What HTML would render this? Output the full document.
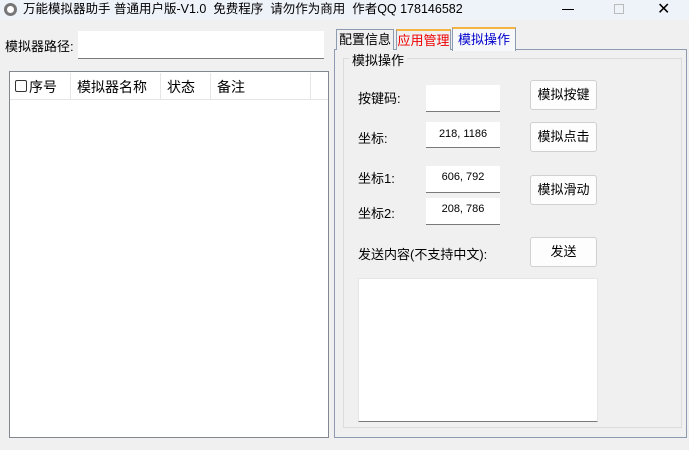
<!DOCTYPE html>
<html><head><meta charset="utf-8"><style>
*{box-sizing:border-box;margin:0;padding:0}
body{width:689px;height:450px;background:#f0f0f0;font-family:"Liberation Sans","Noto Sans CJK SC",sans-serif;font-size:13px;color:#000;position:relative;overflow:hidden}
.a{position:absolute;white-space:nowrap}
.in{position:absolute;background:#fff;border-bottom:1px solid #7a7a7a;font-size:11px;text-align:center;line-height:22px}
.btn{position:absolute;background:#fdfdfd;border:1px solid #d0d0d0;border-radius:3px;text-align:center;font-size:13px}
</style></head><body>
<div class="a" style="left:0;top:0;width:689px;height:20px;background:#eef2f9"></div>
<div class="a" style="left:4px;top:3px;width:13px;height:13px;border-radius:50%;border:3px solid #777;background:#fff"></div>
<div class="a" style="left:23px;top:1px;font-size:12.5px;line-height:16px">万能模拟器助手 普通用户版-V1.0&nbsp; 免费程序&nbsp; 请勿作为商用&nbsp; 作者QQ 178146582</div>
<div class="a" style="left:562px;top:9px;width:12px;height:1px;background:#000"></div>
<div class="a" style="left:614px;top:4px;width:10px;height:10px;border:1px solid #bbb"></div>
<div class="a" style="left:657px;top:-1px;font-size:16px">✕</div>

<div class="a" style="left:5px;top:36px">模拟器路径:</div>
<div class="a" style="left:78px;top:31px;width:246px;height:28px;background:#fff;border-bottom:1px solid #7a7a7a"></div>

<div class="a" style="left:9px;top:71px;width:320px;height:367px;background:#fff;border:1px solid #828790"></div>
<div class="a" style="left:10px;top:72px;width:318px;height:28px;border-bottom:1px solid #e5e5e5"></div>
<div class="a" style="left:70px;top:73px;width:1px;height:26px;background:#e5e5e5"></div>
<div class="a" style="left:160px;top:73px;width:1px;height:26px;background:#e5e5e5"></div>
<div class="a" style="left:210px;top:73px;width:1px;height:26px;background:#e5e5e5"></div>
<div class="a" style="left:310px;top:73px;width:1px;height:26px;background:#e5e5e5"></div>
<div class="a" style="left:15px;top:80px;width:12px;height:12px;border:1px solid #333;border-radius:2px"></div>
<div class="a" style="left:29px;top:77px;font-size:14px">序号</div>
<div class="a" style="left:77px;top:77px;font-size:14px">模拟器名称</div>
<div class="a" style="left:167px;top:77px;font-size:14px">状态</div>
<div class="a" style="left:217px;top:77px;font-size:14px">备注</div>

<div class="a" style="left:334px;top:49px;width:353px;height:389px;border:1px solid #8c9bb0;background:#f0f0f0"></div>
<div class="a" style="left:336px;top:29px;width:58px;height:21px;border:1px solid #8c9bb0;border-bottom:none;background:#f0f0f0;text-align:center;line-height:20px">配置信息</div>
<div class="a" style="left:396px;top:29px;width:55px;height:21px;border:1px solid #8c9bb0;border-top:2px solid #f5b342;border-bottom:none;background:#f0f0f0;color:#e00;text-align:center;line-height:19px">应用管理</div>
<div class="a" style="left:452px;top:27px;width:64px;height:24px;border:1px solid #8c9bb0;border-top:2px solid #f5b342;border-bottom:none;background:#f7f8fa;color:#00c;text-align:center;line-height:21px">模拟操作</div>

<div class="a" style="left:343px;top:58px;width:339px;height:370px;border:1px solid #dcdcdc"></div>
<div class="a" style="left:349px;top:50px;padding:0 3px;background:#f0f0f0">模拟操作</div>

<div class="a" style="left:358px;top:88px">按键码:</div>
<div class="in" style="left:426px;top:85px;width:74px;height:27px"></div>
<div class="btn" style="left:530px;top:80px;width:67px;height:30px;line-height:28px">模拟按键</div>

<div class="a" style="left:358px;top:128px">坐标:</div>
<div class="in" style="left:426px;top:122px;width:74px;height:26px;line-height:25px">218, 1186</div>
<div class="btn" style="left:530px;top:122px;width:67px;height:30px;line-height:28px">模拟点击</div>

<div class="a" style="left:358px;top:168px">坐标1:</div>
<div class="in" style="left:426px;top:166px;width:74px;height:27px">606, 792</div>
<div class="btn" style="left:530px;top:175px;width:67px;height:30px;line-height:28px">模拟滑动</div>

<div class="a" style="left:358px;top:203px">坐标2:</div>
<div class="in" style="left:426px;top:198px;width:74px;height:27px">208, 786</div>

<div class="a" style="left:358px;top:244px">发送内容(不支持中文):</div>
<div class="btn" style="left:530px;top:237px;width:67px;height:30px;line-height:28px">发送</div>

<div class="a" style="left:358px;top:278px;width:240px;height:144px;background:#fff;border:1px solid #e6e6e6;border-bottom:1px solid #7a7a7a"></div>
</body></html>
